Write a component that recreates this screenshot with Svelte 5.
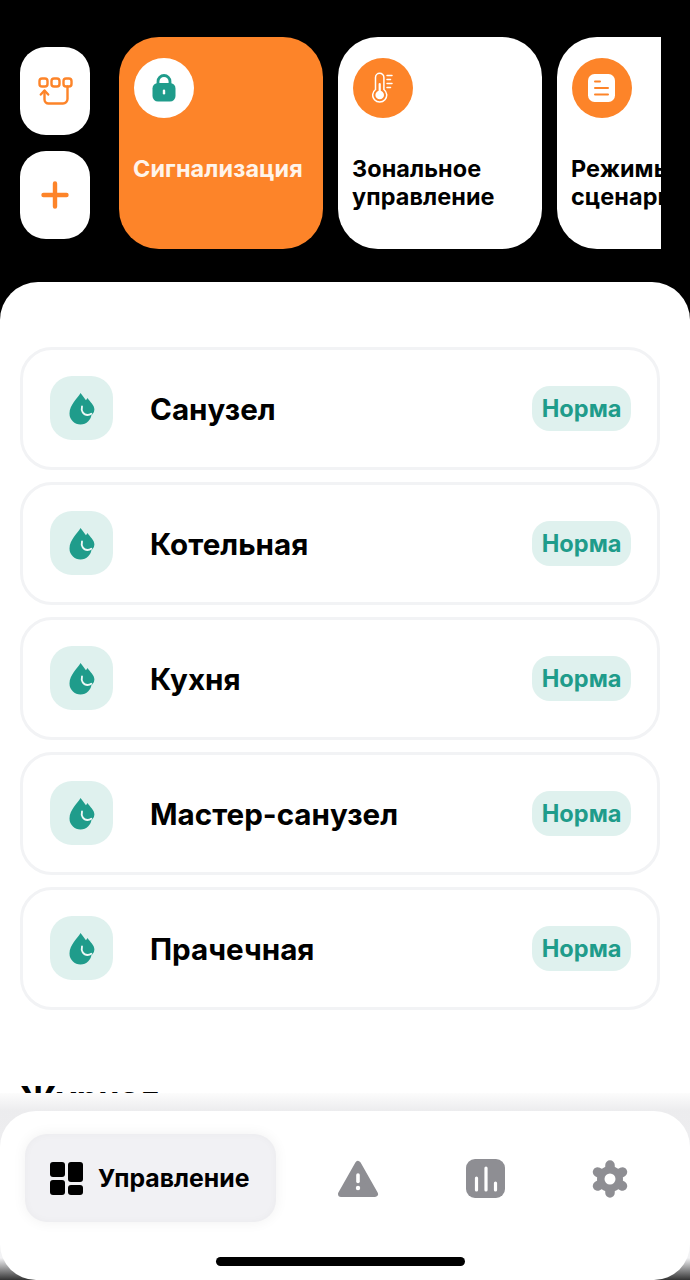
<script>
  const rooms = ["Санузел", "Котельная", "Кухня", "Мастер-санузел", "Прачечная"];
</script>

<div class="screen">
  <header class="top">
    <div class="side">
      <button class="square" aria-label="Сценарий">
        <svg width="35" height="29" viewBox="0 0 35 29" fill="none" stroke="#fd8429" stroke-width="2.4" stroke-linecap="round" stroke-linejoin="round">
          <rect x="1.5" y="1.5" width="8" height="8" rx="2.6" />
          <rect x="13.5" y="1.5" width="8" height="8" rx="2.6" />
          <rect x="25.5" y="1.5" width="8" height="8" rx="2.6" />
          <path d="M29.5 9.5V22a4.5 4.5 0 0 1-4.5 4.5H10.500a4 4 0 0 1-4-4V14" />
          <path d="M2.800 17.500L6.500 13.500L10.200 17.500" />
        </svg>
      </button>
      <button class="square" aria-label="Добавить">
        <svg width="28" height="28" viewBox="0 0 28 28" stroke="#fd8429" stroke-width="4.4" stroke-linecap="round">
          <path d="M14 2.500V25.500M2.500 14H25.500" />
        </svg>
      </button>
    </div>

    <div class="strip">
      <article class="card active">
        <span class="disc white">
          <svg width="26" height="30" viewBox="0 0 26 30">
            <path d="M7 12V8.500a6 6 0 0 1 12 0V12" fill="none" stroke="#1f9c8b" stroke-width="2.800" />
            <rect x="1.500" y="10" width="23" height="18.500" rx="5.500" fill="#1f9c8b" />
            <rect x="11.800" y="16.500" width="2.400" height="5" rx="1.200" fill="#fff" />
          </svg>
        </span>
        <h2>Сигнализация</h2>
      </article>
      <article class="card">
        <span class="disc orange">
          <svg width="22" height="32" viewBox="0 0 22 32" fill="none" stroke="#fff" stroke-width="1.500" stroke-linecap="round">
            <path d="M3.500 17.500V5.500a4.200 4.200 0 0 1 8.400 0V17.500a7 7 0 1 1-8.400 0Z" />
            <circle cx="7.700" cy="23" r="4.300" fill="#fff" stroke="none" />
            <path d="M7.700 20V12" stroke-width="2.200" />
            <path d="M15 3.500H20M15 7.500H18.500M15 11.500H20M15 15.500H18.500" />
          </svg>
        </span>
        <h2>Зональное управление</h2>
      </article>
      <article class="card">
        <span class="disc orange">
          <svg width="28" height="28" viewBox="0 0 28 28">
            <rect width="27" height="28" rx="6.500" fill="#fff" />
            <path d="M7 7.500H12M7 14H20M7 20.500H20" stroke="#fd8429" stroke-width="2" stroke-linecap="round" />
          </svg>
        </span>
        <h2>Режимы и сценарии</h2>
      </article>
    </div>
  </header>

  <main class="sheet">
    <section class="rooms">
      {#each rooms as room}
        <div class="row">
          <span class="tile">
            <svg width="26" height="33" viewBox="0 0 26 33">
              <path d="M11.500 1C9 6 .5 12.500 .5 21.500a11 11 0 0 0 22 0C22.500 14.500 16 7 11.500 1Z" fill="#1f9c8b" />
              <path d="M18.500 6C16 10 12 13 12 17.500a6.700 6.700 0 0 0 13.400 0C25.400 13 21 10 18.500 6Z" fill="#1f9c8b" />
              <path d="M13 14.500C11.800 19 14.500 23 18.500 23C20 23 21.200 22.600 22.300 21.800" fill="none" stroke="#eef8f6" stroke-width="1.900" stroke-linecap="round" />
            </svg>
          </span>
          <span class="name">{room}</span>
          <span class="badge">Норма</span>
        </div>
      {/each}
    </section>
    <h3>Журнал</h3>
  </main>

  <div class="dock">
    <nav class="nav">
      <button class="tab">
        <svg width="33" height="33" viewBox="0 0 33 33" fill="#000">
          <rect width="15" height="15" rx="3" />
          <rect x="18" width="15" height="20" rx="3" />
          <rect y="18" width="15" height="15" rx="3" />
          <rect x="18" y="23" width="15" height="10" rx="3" />
        </svg>
        <span>Управление</span>
      </button>
      <div class="others">
        <svg width="43" height="38" viewBox="0 0 43 38">
          <path d="M21 4L38 34H4Z" fill="#8e8e93" stroke="#8e8e93" stroke-width="6" stroke-linejoin="round" />
          <path d="M21 15V21.500" stroke="#fff" stroke-width="3.600" stroke-linecap="round" />
          <circle cx="21" cy="28" r="2.200" fill="#fff" />
        </svg>
        <svg width="39" height="40" viewBox="0 0 39 40">
          <rect width="39" height="39" rx="9" fill="#8e8e93" />
          <path d="M10.500 31V19M20 31V9M29.500 31V24" stroke="#fff" stroke-width="3.200" stroke-linecap="round" />
        </svg>
        <svg width="38" height="38" viewBox="0 0 38 38">
          <circle cx="19" cy="19" r="13" fill="#8e8e93" />
          <path d="M19 19L19 5M19 19L31.500 12M19 19L31.500 26M19 19L19 33M19 19L6.500 26M19 19L6.500 12" stroke="#8e8e93" stroke-width="9.500" stroke-linecap="round" />
          <circle cx="19" cy="19" r="5.500" fill="#fff" />
        </svg>
      </div>
    </nav>
    <div class="home"></div>
  </div>
</div>

<style>
  :global(body) {
    background: #000;
  }
  .screen {
    position: relative;
    width: 690px;
    height: 1280px;
    overflow: hidden;
    background: #000;
    font-family: Inter, "Liberation Sans", sans-serif;
    color: #000;
  }
  button {
    border: none;
    padding: 0;
    font: inherit;
    color: inherit;
    background: none;
  }
  .top {
    display: flex;
    align-items: flex-start;
    gap: 29px;
    height: 282px;
    box-sizing: border-box;
    padding: 37px 0 0 20px;
  }
  .side {
    display: flex;
    flex-direction: column;
    gap: 16px;
    margin-top: 10px;
  }
  .square {
    display: flex;
    align-items: center;
    justify-content: center;
    width: 70px;
    height: 88px;
    border-radius: 26px;
    background: #fff;
  }
  .strip {
    display: flex;
    gap: 15px;
    width: 542px;
    overflow: hidden;
  }
  .card {
    flex: 0 0 204px;
    height: 212px;
    box-sizing: border-box;
    padding: 21px 14px 0 15px;
    border-radius: 40px;
    background: #fff;
  }
  .card.active {
    background: #fd8429;
    color: #fff4ea;
  }
  .disc {
    display: flex;
    align-items: center;
    justify-content: center;
    width: 60px;
    height: 60px;
    margin-bottom: 37px;
    border-radius: 50%;
  }
  .disc.white {
    background: #fff;
  }
  .disc.orange {
    background: #fd8429;
  }
  h2 {
    margin: 0 0 0 -1px;
    font-size: 23.4px;
    line-height: 28px;
    font-weight: 650;
    letter-spacing: 0.1px;
  }
  .sheet {
    height: 998px;
    box-sizing: border-box;
    padding: 65px 30px 0 20px;
    border-radius: 38px 38px 0 0;
    background: #fff;
  }
  .rooms {
    display: flex;
    flex-direction: column;
    gap: 12px;
  }
  .row {
    display: flex;
    align-items: center;
    height: 123px;
    box-sizing: border-box;
    padding: 0 26px 1px 27px;
    border: 3px solid #f2f3f5;
    border-radius: 32px;
  }
  .tile {
    display: flex;
    align-items: center;
    justify-content: center;
    flex: none;
    width: 63px;
    height: 64px;
    border-radius: 22px;
    background: #dff1ee;
  }
  .name {
    flex: 1;
    margin-left: 37px;
    padding-top: 2px;
    font-size: 29.6px;
    font-weight: 650;
  }
  .badge {
    margin-top: 1px;
    padding: 9px 9.500px;
    border-radius: 18px;
    background: #dff1ee;
    color: #1f9c8b;
    font-size: 23.6px;
    line-height: 27px;
    font-weight: 650;
  }
  h3 {
    margin: 68px 0 0;
    font-size: 34px;
    font-weight: 700;
  }
  .dock {
    position: absolute;
    left: 0;
    right: 0;
    bottom: 0;
    height: 187px;
    padding-top: 18px;
    box-sizing: border-box;
    background: linear-gradient(#fcfcfc 0, #ececee 18px, #f2f2f4 165px, #333 187px);
  }
  .nav {
    display: flex;
    align-items: flex-start;
    height: 169px;
    box-sizing: border-box;
    padding: 23px 0 0 25px;
    border-radius: 36px;
    background: #fff;
  }
  .tab {
    display: flex;
    align-items: center;
    gap: 15px;
    width: 251px;
    height: 88px;
    box-sizing: border-box;
    padding-left: 25px;
    border-radius: 22px;
    background: #f1f1f4;
    box-shadow: 0 0 14px rgba(0, 0, 0, 0.06), inset 0 0 8px rgba(0, 0, 0, 0.03);
    font-size: 24.8px;
    font-weight: 650;
  }
  .others {
    display: flex;
    align-items: center;
    gap: 86px;
    height: 88px;
    margin-left: 61px;
    transform: translateY(1px);
  }
  .home {
    position: absolute;
    left: 216px;
    bottom: 14px;
    width: 249px;
    height: 9px;
    border-radius: 5px;
    background: #000;
  }
</style>
